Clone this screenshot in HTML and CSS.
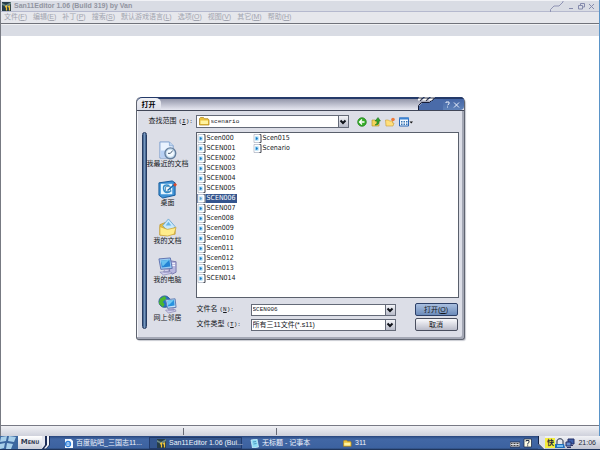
FILE: index.html
```html
<!DOCTYPE html>
<html>
<head>
<meta charset="utf-8">
<title>San11Editor 1.06 (Build 319) by Van</title>
<link rel="stylesheet" href="styles.css">
</head>
<body>
<svg class="defs" aria-hidden="true">
  <symbol id="file" viewBox="0 0 9 9"><path d="M1 .5h5.5L8 2v6.5H1z" fill="#fff" stroke="#9aa3b5" stroke-width=".6"/><path d="M6.500.5H8v8H6.500" fill="none" stroke="#35383f" stroke-width=".8"/><path d="M2 2.500h3.500v4H2z" fill="#8fd0f2"/><path d="M3 3l2 1.500-2 1.500z" fill="#1873c0"/></symbol>
  <symbol id="folder" viewBox="0 0 11 9"><path d="M.5 8V1.500L1.500.5h3l1 1.200h3.500L10 3v5z" fill="#ecc23d" stroke="#a77e18" stroke-width=".7"/><path d="M1.500 3.500h7.500v3.500h-7.500z" fill="#fff3a0"/></symbol>
  <symbol id="app" viewBox="0 0 9 9"><path d="M0 0h9v9H0z" fill="#263d49"/><path d="M0 1l4 2 5-3v2L5 5 0 3z" fill="#6d8a83"/><path d="M3 5l1.500-1V8.500M6 5l1.500-1V8.500" fill="none" stroke="#efc33a" stroke-width="1.200"/></symbol>
</svg>

<div class="window">
  <header class="titlebar">
    <svg class="app-icon"><use href="#app"/></svg>
    <h1>San11Editor 1.06 (Build 319) by Van</h1>
    <svg class="notch" viewBox="0 0 15 11"><path d="M.5 11V8.500L4 5h5l4-4V0" fill="none" stroke="#8f93b4"/></svg>
    <button class="win-btn" aria-label="Minimize"><svg viewBox="0 0 7 7"><path d="M1 5.500h4"/></svg></button>
    <button class="win-btn" aria-label="Restore"><svg viewBox="0 0 7 7"><path d="M2.500 2.500v-2h4v3.500h-2M.5 2.500h4v3.500h-4z"/></svg></button>
    <button class="win-btn" aria-label="Close"><svg viewBox="0 0 7 7"><path d="M1 1l5 5M6 1L1 6"/></svg></button>
  </header>
  <nav class="menubar">
    <a href="#">文件(<u>F</u>)</a><a href="#">编辑(<u>E</u>)</a><a href="#">补丁(<u>P</u>)</a><a href="#">搜索(<u>S</u>)</a><a href="#">默认游戏语言(<u>L</u>)</a><a href="#">选项(<u>O</u>)</a><a href="#">视图(<u>V</u>)</a><a href="#">其它(<u>M</u>)</a><a href="#">帮助(<u>H</u>)</a>
  </nav>
  <div class="toolbar"></div>

  <main class="client">
    <form class="dialog" role="dialog" aria-labelledby="dlg-title">
      <div class="dlg-title">
        <h2 id="dlg-title">打开</h2>
        <div class="dlg-controls">
          <svg class="slashes" viewBox="0 0 25 13"><path d="M1 13V9l3-3h7l6-6h8v13z" fill="#4a6ba9"/><path d="M17 0h8v2h-9z" fill="#243a69"/><path d="M.5 13V8.500L3.500 5.500h8L16 1" fill="none" stroke="#151c38"/><path d="M1 0h4L2 3.500H-1zM7 0h4L8 3.500H4zM13 0h4l-3 3.500h-4z" fill="#fff"/><path d="M0 1h4.500L2 4M6 1h4.500L8 4M12 1h4.500L14 4" fill="none" stroke="#1c2137" stroke-width=".9"/></svg>
          <button type="button" class="dlg-btn" aria-label="Help"><svg viewBox="0 0 7 7"><path d="M2 2V1h3v2L3.500 4M3.500 5.500v1"/></svg></button>
          <button type="button" class="dlg-btn" aria-label="Close"><svg viewBox="0 0 7 7"><path d="M1 1.500l5 5M6 1.500l-5 5"/></svg></button>
        </div>
      </div>

      <div class="lookin">
        <label for="folder-select">查找范围<span class="key">(<u>I</u>):</span></label>
        <div class="combo folder-combo">
          <svg class="folder-icon"><use href="#folder"/></svg>
          <select id="folder-select" class="mono"><option>scenario</option></select>
          <span class="arrow"><svg viewBox="0 0 8 8"><path d="M1.500 2.500L4 5l2.500-2.500" /></svg></span>
        </div>
        <div class="tools">
          <button type="button" aria-label="Back"><svg viewBox="0 0 10 10"><circle cx="5" cy="5" r="4.300" fill="#36ad28" stroke="#1b7c19" stroke-width=".7"/><path d="M2.500 5h5M5 2.500L2.500 5 5 7.500" fill="none" stroke="#fff" stroke-width="1.300"/></svg></button>
          <button type="button" aria-label="Up"><svg viewBox="0 0 10 10"><path d="M1 9V3h3l1 1h3v5z" fill="#f2d45c" stroke="#b48e22" stroke-width=".6"/><path d="M4 8c2-1 2-2 2-4H4l3-3.500L9.500 4H8c0 3-1 4-4 4z" fill="#32a22c" stroke="#166e18" stroke-width=".5"/></svg></button>
          <button type="button" aria-label="New folder"><svg viewBox="0 0 10 10"><path d="M1 9L.5 3h3l1 1h3v2h1.500L8 9z" fill="#ffdf7c" stroke="#c79b35" stroke-width=".6"/><circle cx="8" cy="2.500" r="1.800" fill="#ef7b3a"/></svg></button>
          <button type="button" class="views" aria-label="Views"><svg viewBox="0 0 14 10"><path d="M.5 1h9v8h-9z" fill="#f4f9ff" stroke="#2764b4"/><path d="M0 .5h10v2H0z" fill="#3d83d3"/><path d="M2 4h1.500v1.500H2zM4.500 4H6v1.500H4.500zM7 4h1.500v1.500H7zM2 6.500h1.500V8H2zM4.500 6.500H6V8H4.500zM7 6.500h1.500V8H7z" fill="#3976b5"/><path d="M10.500 4.500h3.500L12.250 6.500z" fill="#111"/></svg></button>
        </div>
      </div>

      <div class="dlg-body">
        <div class="rail"></div>
        <ul class="places">
          <li><a href="#"><svg viewBox="0 0 20 20"><path d="M2 1h10l4 4v13H2z" fill="#eaf3ff" stroke="#7a9dcc"/><path d="M12 1v4h4" fill="#bdd5f1" stroke="#7a9dcc" stroke-width=".7"/><path d="M3 10h6v7H3z" fill="#b7d0f3"/><circle cx="13" cy="13" r="5.700" fill="#c5dbed" stroke="#657f9e" stroke-width="1.400"/><circle cx="13" cy="13" r="3.700" fill="#f3faff"/><path d="M10.500 13H13l2.500-3" fill="none" stroke="#3d536e"/></svg><span>我最近的文档</span></a></li>
          <li><a href="#"><svg viewBox="0 0 20 20"><path d="M1 3l14-2 3 2v13L5 19l-4-3z" fill="#3f93d6" stroke="#14589b"/><path d="M3 4h12v11H3z" fill="#e4f5ff"/><path d="M12 6c-4-2-7 0-6 4s5 4 8 1" fill="none" stroke="#318ac9" stroke-width="1.500"/><path d="M8 7h5v5H8z" fill="#fff" stroke="#498bb6"/><path d="M10 11l7-6" stroke="#166aad" stroke-width="1.500"/><path d="M16 5l2-2 2 2-2 2z" fill="#d8492b"/></svg><span>桌面</span></a></li>
          <li><a href="#"><svg viewBox="0 0 20 20"><path d="M2 18V7l5-2 3 2 8 3v7z" fill="#e8bf42" stroke="#b99227" stroke-width=".8"/><path d="M5 8l6-7 7 8-6 7z" fill="#c7e8fd" stroke="#5b9ecb" stroke-width=".8"/><path d="M8 8l3-4 3 4z" fill="#66b4e7"/><path d="M2 18V9l8 3 9-2-2 7-7 2z" fill="#ffed8b" stroke="#cba437" stroke-width=".8"/></svg><span>我的文档</span></a></li>
          <li><a href="#"><svg viewBox="0 0 20 20"><path d="M13 4l6 1v11l-4 2-3-2z" fill="#b8b7df" stroke="#7777ad"/><path d="M15 7h3M15 9h3" stroke="#fff"/><path d="M1 2l12-1 2 11-12 1z" fill="#9bcbf2" stroke="#5e72b0"/><path d="M3 4l9-1 1 7-9 1z" fill="#2383d4"/><path d="M3 4l9-1-7 7z" fill="#67c0ef"/><path d="M7 13h4l1 3H6zM2 16l10-1 3 2-9 2z" fill="#d2d0ee" stroke="#8180b1" stroke-width=".7"/></svg><span>我的电脑</span></a></li>
          <li><a href="#"><svg viewBox="0 0 20 20"><circle cx="7" cy="7" r="6" fill="#2672c6" stroke="#245691"/><path d="M2 4l5-3 2 3-4 3 2 3-2 3-4-4z" fill="#4bb72f"/><path d="M8 5l10-1 1 9-9 1z" fill="#c4e4fa" stroke="#5d78b1"/><path d="M10 6l7-1 .5 6-7 1z" fill="#2792df"/><path d="M10 6l7-1-6 6z" fill="#70caf3"/><path d="M12 14h4l1 2h-6zM8 16l10-1 1 2-8 2z" fill="#d1d0ec" stroke="#8583b1" stroke-width=".7"/></svg><span>网上邻居</span></a></li>
        </ul>
        <div class="pane">
          <ul class="files">
            <li><svg><use href="#file"/></svg><span>Scen000</span></li>
            <li><svg><use href="#file"/></svg><span>SCEN001</span></li>
            <li><svg><use href="#file"/></svg><span>SCEN002</span></li>
            <li><svg><use href="#file"/></svg><span>SCEN003</span></li>
            <li><svg><use href="#file"/></svg><span>SCEN004</span></li>
            <li><svg><use href="#file"/></svg><span>SCEN005</span></li>
            <li class="selected"><svg><use href="#file"/></svg><span>SCEN006</span></li>
            <li><svg><use href="#file"/></svg><span>SCEN007</span></li>
            <li><svg><use href="#file"/></svg><span>Scen008</span></li>
            <li><svg><use href="#file"/></svg><span>Scen009</span></li>
            <li><svg><use href="#file"/></svg><span>Scen010</span></li>
            <li><svg><use href="#file"/></svg><span>Scen011</span></li>
            <li><svg><use href="#file"/></svg><span>Scen012</span></li>
            <li><svg><use href="#file"/></svg><span>Scen013</span></li>
            <li><svg><use href="#file"/></svg><span>SCEN014</span></li>
            <li><svg><use href="#file"/></svg><span>Scen015</span></li>
            <li><svg><use href="#file"/></svg><span>Scenario</span></li>
          </ul>
          <div class="fields">
            <label for="filename">文件名<span class="key">(<u>N</u>):</span></label>
            <div class="combo">
              <input id="filename" class="mono" type="text" value="SCEN006">
              <span class="arrow"><svg viewBox="0 0 8 8"><path d="M1.500 2.500L4 5l2.500-2.500"/></svg></span>
            </div>
            <button type="submit" class="action primary">打开(<u>O</u>)</button>
            <label for="filetype">文件类型<span class="key">(<u>T</u>):</span></label>
            <div class="combo">
              <select id="filetype"><option>所有三11文件(*.s11)</option></select>
              <span class="arrow"><svg viewBox="0 0 8 8"><path d="M1.500 2.500L4 5l2.500-2.500"/></svg></span>
            </div>
            <button type="button" class="action">取消</button>
          </div>
        </div>
      </div>
    </form>
  </main>

  <footer class="statusbar"><span></span><span></span><span></span></footer>
</div>

<div class="taskbar">
  <button class="start"><svg class="flag" viewBox="0 0 18 13"><path d="M0 0h18v13H0z" fill="#3c679f"/><path d="M1 1l6-1-1 5-6 1zM9 0l7 1-2 5-6-1zM0 8l5-1-1 5-4 1zM7 7l6 1-2 5H6z" fill="#a9d0ea"/></svg><span>M<small>ENU</small></span><svg class="edge" viewBox="0 0 12 13"><path d="M0 0h3v10L0 13z" fill="#e3e5ee"/><path d="M3 0v9L0 13h4l4-4V0z" fill="#1c2c57"/><path d="M5 0v9l-3 3.500h2L7 9V0z" fill="#eef1f8"/></svg></button>
  <div class="tasks">
    <button><svg viewBox="0 0 9 9"><path d="M1 0h6l2 2v7H1z" fill="#f4f9ff"/><circle cx="4" cy="5" r="2.500" fill="none" stroke="#2b7edb" stroke-width="1.300"/><path d="M2 5h4" stroke="#2b7edb"/></svg><span>百度贴吧_三国志11...</span></button>
    <button class="active"><svg><use href="#app"/></svg><span>San11Editor 1.06 (Bui...</span></button>
    <button><svg viewBox="0 0 9 9"><path d="M1 1l6-1 1.500 8-6 1z" fill="#8edcf5" stroke="#d9f6ff" stroke-width=".7"/><path d="M3 3l3-.5M3.500 5l3-.5" stroke="#317ea9" stroke-width=".7"/></svg><span>无标题 - 记事本</span></button>
    <button><svg viewBox="0 0 11 9"><use href="#folder"/></svg><span>311</span></button>
  </div>
  <div class="langbar">
    <svg viewBox="0 0 10 10"><path d="M0 4h10v5H0z" fill="#d9dbe1" stroke="#202a42" stroke-width=".8"/><path d="M1 5.500h8M1 7.500h8" stroke="#444" stroke-dasharray="1 .5"/></svg>
    <svg viewBox="0 0 10 10"><path d="M1 1h7.500v8H1z" fill="#fffde5" stroke="#222e4b" stroke-width=".8"/><path d="M3 3.500V2.500h3v2L4.700 5.500v1M4.700 7.300v1" fill="none" stroke="#273047"/></svg>
  </div>
  <div class="tray">
    <svg class="tray-edge" viewBox="0 0 7 13"><path d="M0 0h7v13H6L1 8z" fill="#dfe1ea"/><path d="M0 0v8l5 5H0z" fill="#3c62a0"/><path d="M.5 0v8L5.500 13" fill="none" stroke="#142449"/></svg>
    <span class="ime">快</span>
    <svg viewBox="0 0 10 10"><path d="M0 6h9l1 4H0z" fill="#216ebc"/><path d="M2 6V3c0-3 6-3 6 0v3" fill="#e7e9ed" stroke="#222f47"/><path d="M2 7h6v2H2z" fill="#76bdf1"/></svg>
    <svg viewBox="0 0 10 10"><path d="M3 1h6v5H3z" fill="#3c5fab" stroke="#252f67"/><path d="M1 4h5v4H1z" fill="#658dd1" stroke="#252f67"/><path d="M2 9.500h4M6 7.500h2" stroke="#303467"/></svg>
    <time>21:06</time>
  </div>
</div>
</body>
</html>
```
FILE: styles.css
```css
* { box-sizing: border-box; margin: 0; padding: 0; }
body {
  display: flex; flex-direction: column; height: 100vh; overflow: hidden;
  background: #fff; color: #15171c;
  font-family: "Liberation Sans", "Noto Sans CJK SC", sans-serif;
  font-size: 7px; line-height: 8px;
}
button, input, select { font: inherit; color: inherit; border: 0; background: none; border-radius: 0; }
ul { list-style: none; }
a { color: inherit; text-decoration: none; }
svg { display: block; flex: none; }
.defs { position: absolute; width: 0; height: 0; }

.window { flex: 1; min-height: 0; display: flex; flex-direction: column; border-left: 1px solid #777a82; border-right: 1px solid #5a94c8; }
.titlebar { display: flex; align-items: center; height: 12px; padding: 0 2px 0 1px; background: #d9dce4; border-top: 1px solid #f1f2f6; border-bottom: 1px solid #b5b9ce; }
.app-icon { width: 9px; height: 9px; }
.titlebar h1 { flex: 1; margin-left: 3px; font: bold 7px/10px "Liberation Sans", sans-serif; color: #9194a0; }
.notch { width: 15px; height: 11px; margin-right: 2px; }
.win-btn { width: 10px; height: 9px; padding: 1px; }
.win-btn svg { width: 7px; height: 7px; fill: none; stroke: #858bad; }
.menubar { display: flex; gap: 6px; height: 11px; padding: 1px 3px; background: #e6e7ec; color: #a1a4af; white-space: nowrap; }
.toolbar { height: 13px; background: #d9dce4; border-top: 1px solid #70727a; box-shadow: inset 0 1px #f0f1f4; }

.client { flex: 1; min-height: 0; padding-top: 61px; }
.dialog { width: 55%; min-width: 329px; margin: 0 auto; background: #dcdee7; border: 1px solid #5f6470; border-top: 0; border-radius: 5px 5px 3px 3px; box-shadow: inset -2px -2px #a4a8b5, inset 1px 0 #f5f6fa, 1px 1px 1px #c9cbd2; }
.dlg-title { display: flex; justify-content: space-between; height: 14px; border-top: 2px solid #243a69; border-bottom: 1px solid #414657; border-radius: 5px 4px 0 0; background: linear-gradient(#9497ab, #e8e9f2); }
.dlg-title h2 { margin-top: -1px; padding: 1px 5px 0; font-size: 7px; line-height: 11px; background: linear-gradient(#f0f1f5, #dcdee9); border-radius: 5px 5px 0 0; color: #000; }
.dlg-controls { display: flex; margin-top: -2px; }
.slashes { width: 25px; height: 13px; }
.dlg-btn { height: 13px; width: 9px; padding: 4px 1px 2px; background: linear-gradient(#243a69 0 2px, #4566a5 2px, #5f82ba); }
.dlg-btn:last-child { width: 12px; border-radius: 0 4px 4px 0; }
.dlg-btn svg { width: 7px; height: 7px; fill: none; stroke: #e9effb; }

.lookin { display: flex; align-items: center; padding: 4px 5px 3px 12px; }
.lookin label { width: 47px; }
label { white-space: nowrap; }
.key { margin-left: 2px; font-family: "Liberation Mono", monospace; font-size: 6px; }
.mono { font-family: "Liberation Mono", monospace; font-size: 6px; }
.combo { display: flex; align-items: stretch; height: 12px; background: #fff; border: 1px solid #646a78; }
.combo input, .combo select { flex: 1; min-width: 0; appearance: none; padding-left: 1px; outline: 0; }
.arrow { width: 10px; border-left: 1px solid #646a78; background: linear-gradient(#f3f4f8, #b8bbc9); display: flex; align-items: center; justify-content: center; }
.arrow svg { width: 8px; height: 8px; fill: none; stroke: #10131a; stroke-width: 2; }
.folder-combo { width: 153px; height: 13px; align-items: center; }
.folder-combo .arrow { align-self: stretch; }
.folder-icon { width: 11px; height: 9px; margin: 0 0 0 2px; }
.tools { display: flex; gap: 4px; margin-left: 8px; }
.tools svg { width: 10px; height: 10px; }
.tools .views svg { width: 14px; }

.dlg-body { display: flex; padding: 1px 5px 8px; }
.rail { flex: none; width: 5px; height: 197px; border: 1px solid #273c61; border-radius: 3px; background: linear-gradient(90deg, #345583, #7797bd, #345583); }
.places { flex: none; width: 42px; height: 190px; padding: 9px 0 0; display: flex; flex-direction: column; justify-content: space-between; }
.places a { display: flex; flex-direction: column; align-items: center; white-space: nowrap; }
.places svg { width: 19px; height: 19px; }
.pane { flex: 1; min-width: 0; margin-left: 7px; }
.files { display: grid; grid-auto-flow: column; grid-template-rows: repeat(15, 10px); grid-auto-columns: 56px; height: 166px; background: #fff; border: 1px solid #5a606c; font-family: "Liberation Sans Narrow", "DejaVu Sans Condensed", sans-serif; }
.files li { display: flex; align-items: center; }
.files svg { width: 9px; height: 9px; }
.files span { line-height: 9px; padding: 0 1px; }
.files .selected span { background: #34558e; color: #fff; }
.files .selected svg { background: #34558e; opacity: .7; }
.fields { display: grid; grid-template-columns: 54px 1fr 43px; align-items: center; row-gap: 2px; padding: 5px 1px 0 1px; }
.action { height: 13px; margin-left: 0; border: 1px solid #4a4f5f; border-radius: 2px; background: linear-gradient(#fafafd, #b9bbc9); }
.primary { background: linear-gradient(#a9bfdf, #6c8bba); border-color: #2d4068; }
.fields .combo { margin-right: 19px; }

.statusbar { display: grid; grid-template-columns: 182px 93px 1fr; height: 11px; border-top: 1px solid #777984; background: linear-gradient(#f0f1f5, #cfd1dc); padding-top: 2px; }
.statusbar span + span { border-left: 1px solid #686b76; height: 7px; }

.taskbar { display: flex; height: 14px; background: linear-gradient(#27457c, #4267a5 3px, #3c62a0 12px, #172746); color: #f1f5fc; }
.start { display: flex; align-items: center; width: 56px; height: 13px; }
.flag { width: 18px; height: 13px; }
.start span { flex: none; width: 24px; height: 13px; line-height: 13px; background: linear-gradient(#fff, #c9ccd8); color: #333b51; font-family: "DejaVu Sans", sans-serif; font-weight: bold; font-size: 7px; }
.start small { font-size: 5px; }
.edge { width: 12px; height: 13px; }
.tasks { flex: 1; display: flex; padding-top: 1px; }
.tasks button { display: flex; align-items: center; gap: 3px; width: 93px; height: 12px; padding: 0 7px 0 8px; white-space: nowrap; }
.tasks .active { border: 1px solid #223b6c; background: #34568e; padding: 0 6px 0 7px; }
.tasks svg { width: 9px; height: 9px; }
.langbar { display: flex; align-items: center; gap: 3px; margin-right: 5px; }
.langbar svg, .tray svg { width: 10px; height: 10px; }
.tray { display: flex; align-items: center; padding-right: 4px; height: 13px; background: linear-gradient(#f1f2f6, #c2c5d2); color: #252a38; }
.tray .tray-edge { width: 7px; height: 13px; }
.ime { width: 10px; line-height: 10px; text-align: center; background: #f4ed3c; font-weight: bold; }
.tray time { margin-left: 3px; }
```
